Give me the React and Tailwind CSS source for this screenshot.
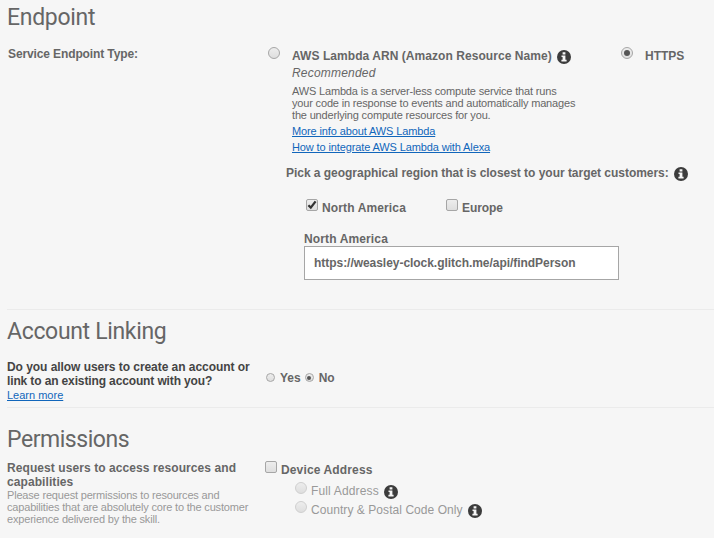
import React from "react";

function Info({ className = "" }) {
  return (
    <svg className={"h-[14px] w-[14px] shrink-0 " + className} viewBox="0 0 14 14">
      <circle cx="7" cy="7" r="7" fill="#3c3c3c" />
      <path d="M5.6 2.2h2.8v2.3H5.6zM4.5 5.4h3.9v4.4h1.2v1.7H4.4V9.8h1.2V7.1H4.5z" fill="#f6f6f6" />
    </svg>
  );
}

function Radio({ checked, small, disabled, className = "" }) {
  return (
    <span
      className={
        "flex shrink-0 items-center justify-center rounded-full border bg-linear-to-b from-[#ededed] to-[#dedede] " +
        (small ? "h-[9px] w-[9px] " : "h-3 w-3 ") +
        (disabled ? "border-[#cfcfcf] " : "border-[#a6a6a6] ") +
        className
      }
    >
      {checked && <span className={"rounded-full bg-[#555] " + (small ? "h-[4px] w-[4px]" : "h-[6px] w-[6px]")} />}
    </span>
  );
}

function Check({ checked, className = "" }) {
  return (
    <span className={"block h-3 w-3 shrink-0 rounded-[2px] border border-[#a6a6a6] bg-linear-to-b from-[#ededed] to-[#dedede] " + className}>
      {checked && (
        <svg className="block h-[10px] w-[10px]" viewBox="0 0 10 10">
          <path d="M1.4 5.2 3.8 7.6 8.6 1.4" fill="none" stroke="#333" strokeWidth="2.3" />
        </svg>
      )}
    </span>
  );
}

const heading = "font-['Roboto'] text-[23px] leading-7 text-[#666]";
const link = "block w-fit text-[11px] leading-4 text-[#1166bb] underline underline-offset-1";

export default function App() {
  return (
    <main className="h-[538px] w-[714px] overflow-hidden bg-[#f6f6f6] pl-[7px] font-['Liberation_Sans',Arial,sans-serif] text-[12px] leading-4 whitespace-nowrap text-[#666]">
      <section className="h-[310px] border-b border-[#ebebeb] pt-1">
        <h2 className={heading + " tracking-[-0.3px]"}>Endpoint</h2>
        <div className="flex pt-[14px] font-bold">
          <div className="w-[261px] pl-px tracking-[-0.12px]">Service Endpoint Type:</div>
          <div className="w-[353px] pt-px">
            <div className="flex">
              <Radio />
              <span className="ml-3 pt-px tracking-[0.06px]">AWS Lambda ARN (Amazon Resource Name)</span>
              <Info className="ml-[5px] mt-[3px]" />
            </div>
            <div className="ml-6 pt-px font-normal">
              <em className="block tracking-[0.2px]">Recommended</em>
              <p className="mt-1 mb-[2px] text-[11px] leading-3 tracking-[-0.17px]">
                AWS Lambda is a server-less compute service that runs<br />
                your code in response to events and automatically manages<br />
                the underlying compute resources for you.
              </p>
              <a className={link + " tracking-[-0.12px]"}>More info about AWS Lambda</a>
              <a className={link + " tracking-[-0.12px]"}>How to integrate AWS Lambda with Alexa</a>
            </div>
          </div>
          <div className="flex pt-px">
            <Radio checked />
            <span className="ml-3 pt-px">HTTPS</span>
          </div>
        </div>
        <div className="ml-[279px] pt-[10px] font-bold">
          <div className="flex">
            <span className="tracking-[-0.03px]">Pick a geographical region that is closest to your target customers:</span>
            <Info className="ml-[5px] mt-[2px]" />
          </div>
          <div className="ml-5 flex pt-[18px]">
            <Check checked />
            <span className="ml-1 w-[124px] pt-px tracking-[0.13px]">North America</span>
            <Check />
            <span className="ml-1 pt-px tracking-[-0.1px]">Europe</span>
          </div>
          <div className="mt-[15px] ml-[18px] tracking-[0.13px]">North America</div>
          <div className="-mt-px ml-[18px] flex h-[34px] w-[315px] items-center border border-[#a6a6a6] bg-white pl-[9px] tracking-[-0.04px]">
            https://weasley-clock.glitch.me/api/findPerson
          </div>
        </div>
      </section>
      <section className="h-[98px] border-b border-[#ebebeb] pt-2">
        <h2 className={heading + " tracking-[-0.33px]"}>Account Linking</h2>
        <div className="flex pt-[14px]">
          <div className="w-[259px]">
            <p className="font-bold leading-[14px] text-[#444]">
              <span className="tracking-[-0.05px]">Do you allow users to create an account or</span><br />
              <span className="tracking-[-0.13px]">link to an existing account with you?</span>
            </p>
            <a className={link + " -mt-px"}>Learn more</a>
          </div>
          <div className="flex pt-[10px] font-bold">
            <Radio small className="mt-[3px]" />
            <span className="ml-[5px]">Yes</span>
            <Radio small checked className="mt-[3px] ml-1" />
            <span className="ml-[5px]">No</span>
          </div>
        </div>
      </section>
      <section className="pt-[18px]">
        <h2 className={heading + " tracking-[-0.45px]"}>Permissions</h2>
        <div className="flex pt-[7px]">
          <div className="w-[258px]">
            <p className="font-bold leading-[14px] tracking-[0.08px]">Request users to access resources and<br />capabilities</p>
            <p className="text-[11px] leading-3 tracking-[-0.18px] text-[#999]">
              Please request permissions to resources and<br />
              capabilities that are absolutely core to the customer<br />
              experience delivered by the skill.
            </p>
          </div>
          <div>
            <div className="flex font-bold">
              <Check />
              <span className="ml-1 pt-px tracking-[0.14px]">Device Address</span>
            </div>
            <div className="ml-[30px] text-[#999]">
              <div className="flex h-[19px] pt-[4px]">
                <Radio disabled />
                <span className="ml-1 pt-px tracking-[0.15px]">Full Address</span>
                <Info className="mt-[3px] ml-[5px]" />
              </div>
              <div className="flex pt-[4px]">
                <Radio disabled />
                <span className="ml-1 pt-px tracking-[0.06px]">Country &amp; Postal Code Only</span>
                <Info className="mt-[3px] ml-[5px]" />
              </div>
            </div>
          </div>
        </div>
      </section>
    </main>
  );
}
